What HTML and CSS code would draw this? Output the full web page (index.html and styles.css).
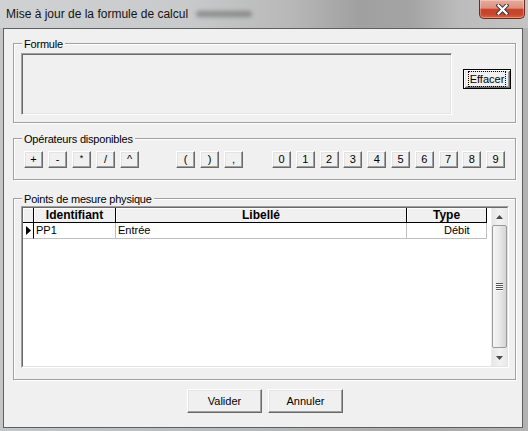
FILE: index.html
```html
<!DOCTYPE html>
<html lang="fr">
<head>
<meta charset="utf-8">
<title>Mise à jour de la formule de calcul</title>
<link rel="stylesheet" href="styles.css">
</head>
<body>
<div class="window">
  <div class="titlebar">
    <span class="title">Mise à jour de la formule de calcul</span>
    <span class="blur"></span>
    <div class="close">
      <svg width="13" height="11" viewBox="0 0 13 11"><path d="M2.5 1.5 L10.5 9.5 M10.5 1.5 L2.5 9.5" stroke="#3c3c3c" stroke-width="4.2" stroke-linecap="square"/><path d="M2.5 1.5 L10.5 9.5 M10.5 1.5 L2.5 9.5" stroke="#fff" stroke-width="2.2" stroke-linecap="square"/></svg>
    </div>
  </div>
  <div class="client">
    <div class="group g-formule">
      <div class="legend">Formule</div>
      <div class="formule-row">
        <div class="textbox"></div>
        <div class="btn btn-default"><span class="focus">Effacer</span></div>
      </div>
    </div>

    <div class="group g-ops">
      <div class="legend">Opérateurs disponibles</div>
      <div class="ops-row">
        <div class="ops">
          <div class="btn opbtn">+</div>
          <div class="btn opbtn">-</div>
          <div class="btn opbtn star">*</div>
          <div class="btn opbtn">/</div>
          <div class="btn opbtn">^</div>
        </div>
        <div class="ops paren">
          <div class="btn opbtn">(</div>
          <div class="btn opbtn">)</div>
          <div class="btn opbtn">,</div>
        </div>
        <div class="ops digits">
          <div class="btn opbtn">0</div>
          <div class="btn opbtn">1</div>
          <div class="btn opbtn">2</div>
          <div class="btn opbtn">3</div>
          <div class="btn opbtn">4</div>
          <div class="btn opbtn">5</div>
          <div class="btn opbtn">6</div>
          <div class="btn opbtn">7</div>
          <div class="btn opbtn">8</div>
          <div class="btn opbtn">9</div>
        </div>
      </div>
    </div>

    <div class="group g-points">
      <div class="legend">Points de mesure physique</div>
      <div class="grid">
        <div class="grid-inner">
          <div class="grid-main">
            <div class="row header">
              <div class="hcell c-ind"></div>
              <div class="hcell c-id">Identifiant</div>
              <div class="hcell c-lib">Libellé</div>
              <div class="hcell c-type">Type</div>
            </div>
            <div class="row data">
              <div class="dcell c-ind ind-data"><svg width="5" height="9" viewBox="0 0 5 9"><polygon points="0,0 5,4.5 0,9" fill="#000"/></svg></div>
              <div class="dcell c-id">PP1</div>
              <div class="dcell c-lib">Entrée</div>
              <div class="dcell c-type type-data">Débit</div>
            </div>
          </div>
          <div class="scrollbar">
            <div class="sb-arrow"><svg width="7" height="4" viewBox="0 0 7 4"><polygon points="0,4 3.5,0 7,4" fill="#4a4a4a"/></svg></div>
            <div class="sb-thumb"><svg width="7" height="8" viewBox="0 0 7 8"><rect x="0" y="0" width="7" height="1" fill="#555"/><rect x="0" y="2" width="7" height="1" fill="#555"/><rect x="0" y="4" width="7" height="1" fill="#555"/><rect x="0" y="6" width="7" height="1" fill="#555"/><rect x="0" y="1" width="7" height="1" fill="#fff"/><rect x="0" y="3" width="7" height="1" fill="#fff"/><rect x="0" y="5" width="7" height="1" fill="#fff"/><rect x="0" y="7" width="7" height="1" fill="#fff"/></svg></div>
            <div class="sb-arrow"><svg width="7" height="4" viewBox="0 0 7 4"><polygon points="0,0 7,0 3.5,4" fill="#4a4a4a"/></svg></div>
          </div>
        </div>
      </div>
    </div>

    <div class="actions">
      <div class="btn btn-lg">Valider</div>
      <div class="btn btn-lg">Annuler</div>
    </div>
  </div>
</div>
</body>
</html>
```

FILE: styles.css
```css
* { box-sizing: border-box; }
html, body { margin: 0; padding: 0; }
body {
  width: 528px;
  height: 431px;
  overflow: hidden;
  font-family: "Liberation Sans", Arial, sans-serif;
  font-size: 11px;
  color: #000;
  background: #b9bbbd;
}

.window {
  width: 528px;
  height: 431px;
  display: flex;
  flex-direction: column;
  padding-bottom: 3px;
  background: linear-gradient(to right, #c3c5c7 0%, #b7b8b9 50%, #aaaaaa 80%, #b3b3b3 100%);
}

.titlebar {
  height: 28px;
  flex: none;
  display: flex;
  align-items: flex-start;
  background: linear-gradient(to right, #cfd1d3 0%, #c9cacb 35%, #b8b8b8 55%, #a0a0a0 68%, #a4a4a4 78%, #bcbcbc 87%, #c4c4c4 100%);
}
.title {
  margin: 7px 0 0 6px;
  font-size: 12px;
  line-height: 15px;
  color: #141414;
  white-space: nowrap;
}
.blur {
  width: 56px;
  height: 6px;
  margin: 11px 0 0 8px;
  background: #5e5e5e;
  filter: blur(2px);
  opacity: 0.55;
  border-radius: 3px;
}
.close {
  margin-left: auto;
  margin-right: 3px;
  width: 46px;
  height: 19px;
  display: flex;
  align-items: center;
  justify-content: center;
  border: 1px solid #6e2a1f;
  border-top: none;
  border-radius: 0 0 5px 5px;
  background: linear-gradient(to bottom, #e8ab9c 0%, #dd907f 45%, #c8442b 52%, #c7452c 78%, #d9663f 100%);
  box-shadow: inset 0 0 0 1px rgba(255, 255, 255, 0.3);
}

.client {
  flex: 1;
  margin: 0 5px 0 3px;
  border: 1px solid #5f5f5f;
  background: #f0f0f0;
  display: flex;
  flex-direction: column;
}

.group {
  border: 1px solid #a0a0a0;
  box-shadow: inset 1px 1px 0 #fff, 1px 1px 0 #fff;
  margin: 0 6px 0 9px;
}
.legend {
  width: max-content;
  height: 13px;
  line-height: 13px;
  margin-top: -6px;
  padding: 0 2px;
  background: #f0f0f0;
  letter-spacing: -0.2px;
}

.g-formule { margin-top: 14px; padding: 0 4px 7px 7px; }
.g-formule .legend { margin-left: 1px; }
.formule-row { display: flex; margin-top: 2px; }
.textbox {
  width: 431px;
  height: 62px;
  border: 1px solid;
  border-color: #a0a0a0 #fff #fff #a0a0a0;
  box-shadow: inset 1px 1px 0 #696969, inset -1px -1px 0 #e3e3e3;
  background: #f0f0f0;
}

.btn {
  display: flex;
  align-items: center;
  justify-content: center;
  background: #f0f0f0;
  border: 1px solid;
  border-color: #fff #696969 #696969 #fff;
  box-shadow: inset -1px -1px 0 #a0a0a0, inset 1px 1px 0 #e3e3e3;
  line-height: 13px;
}
.btn-default {
  margin: 16px 0 0 11px;
  width: 48px;
  height: 20px;
  border: 1px solid #000;
  box-shadow: inset 1px 1px 0 #fff, inset -1px -1px 0 #696969, inset 2px 2px 0 #e3e3e3, inset -2px -2px 0 #a0a0a0;
}
.focus {
  border: 1px dotted #000;
  padding: 1px 1px 0 1px;
  line-height: 13px;
}

.g-ops { margin-top: 15px; padding: 0 0 11px 10px; }
.g-ops .legend { margin-left: -2px; }
.ops-row { display: flex; margin-top: 5px; }
.ops { display: flex; gap: 5px; }
.paren { margin-left: 37px; }
.digits { margin-left: 29px; gap: 4.8px; }
.opbtn { width: 19px; height: 17px; }
.star { font-size: 9px; padding-bottom: 3px; }

.g-points { margin-top: 18px; padding: 0 6px 11px 7px; }
.g-points .legend { margin-left: 1px; }
.grid {
  height: 162px;
  border: 1px solid;
  border-color: #a0a0a0 #fff #fff #a0a0a0;
}
.grid-inner {
  height: 100%;
  display: flex;
  border: 1px solid;
  border-color: #696969 #e3e3e3 #e3e3e3 #696969;
  background: #fff;
}
.grid-main { flex: 1; }
.row { display: flex; }
.c-ind { width: 11px; }
.c-id { width: 82px; }
.c-lib { width: 291px; }
.c-type { width: 80px; }
.hcell {
  height: 15px;
  border-right: 1px solid #000;
  border-bottom: 1px solid #000;
  box-shadow: inset 1px 1px 0 #fff;
  background: #f0f0f0;
  font-weight: bold;
  font-size: 12px;
  line-height: 14px;
  text-align: center;
}
.dcell {
  height: 16px;
  border-right: 1px solid #c0c0c0;
  border-bottom: 1px solid #c0c0c0;
  line-height: 15px;
  padding: 0 0 0 2px;
  white-space: nowrap;
}
.ind-data {
  border-right-color: #000;
  padding: 0;
  display: flex;
  align-items: center;
  justify-content: center;
}
.type-data { padding-left: 37px; }

.scrollbar {
  width: 16px;
  display: flex;
  flex-direction: column;
  background: linear-gradient(to right, #e6e6e6, #f2f2f2 50%, #e9e9e9);
  border-left: 1px solid #ececec;
}
.sb-arrow {
  height: 17px;
  display: flex;
  align-items: center;
  justify-content: center;
}
.sb-thumb {
  flex: 1;
  margin: 0 0 1px 0;
  border: 1px solid #9a9a9a;
  border-radius: 2px;
  background: linear-gradient(to right, #f5f5f5 0%, #ebebeb 45%, #d4d4d4 100%);
  display: flex;
  align-items: center;
  justify-content: center;
}

.actions {
  display: flex;
  justify-content: center;
  gap: 6px;
  margin-top: 9px;
  padding-left: 4px;
}
.btn-lg { width: 75px; height: 24px; }
```
